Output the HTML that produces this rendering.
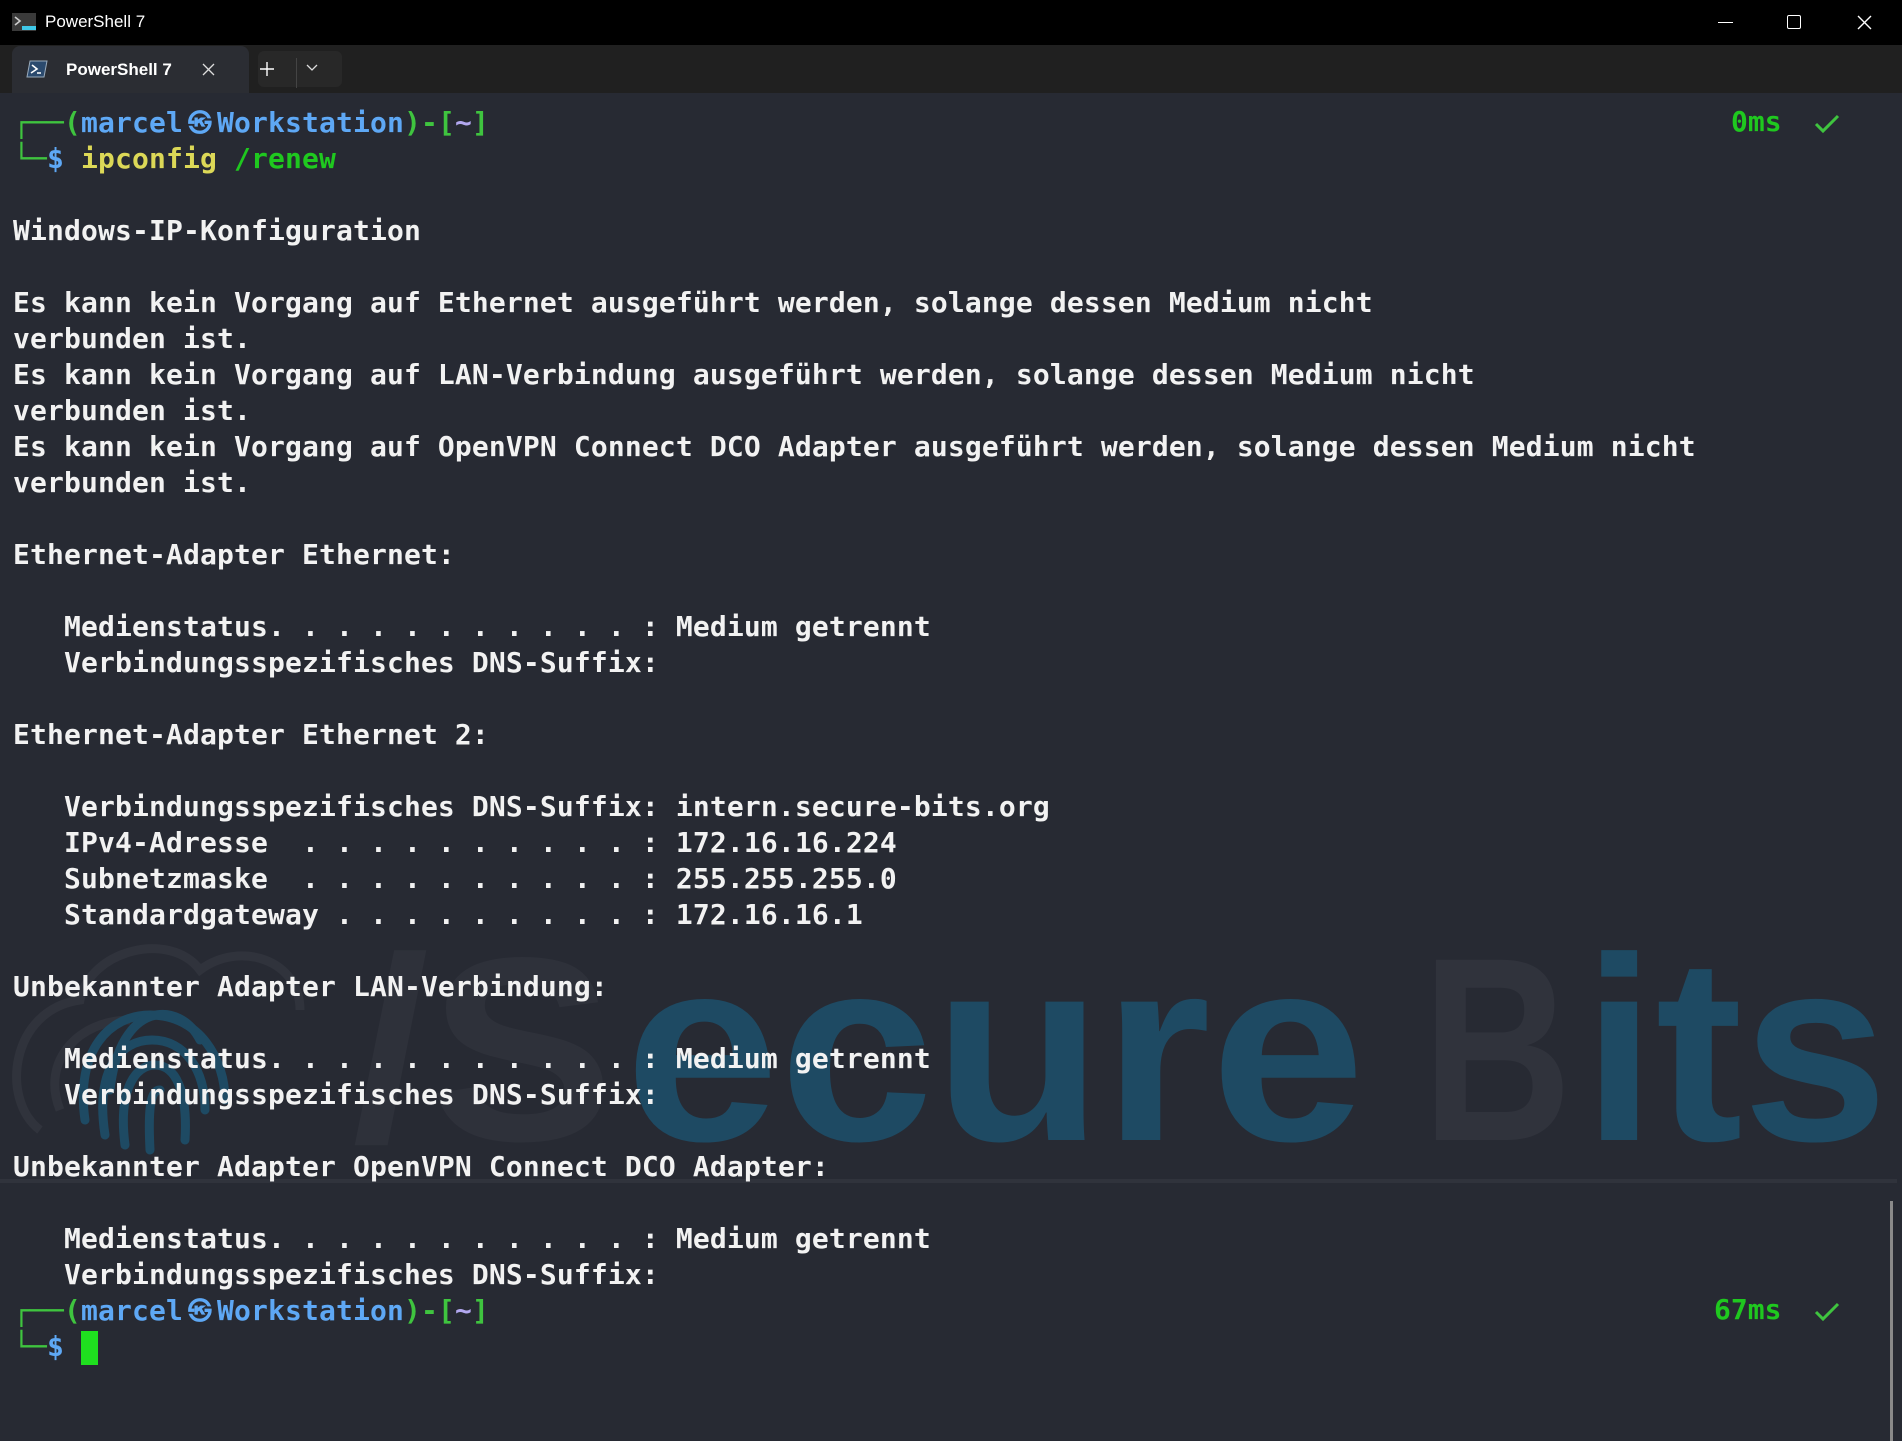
<!DOCTYPE html>
<html><head><meta charset="utf-8"><style>
*{margin:0;padding:0;box-sizing:border-box}
html,body{width:1902px;height:1441px;overflow:hidden;background:#272a33}
#title{position:absolute;left:0;top:0;width:1902px;height:45px;background:#000;color:#fff;font:17px "Liberation Sans",sans-serif}
#tabbar{position:absolute;left:0;top:45px;width:1902px;height:48px;background:#202020}
#tab{position:absolute;left:12px;top:46px;width:237px;height:47px;background:#2b2d33;border-radius:8px 8px 0 0;color:#fff;font:bold 17px "Liberation Sans",sans-serif}
#term{position:absolute;left:0;top:93px;width:1902px;height:1348px;background:#272a33;overflow:hidden}
pre{position:absolute;left:13px;top:11.5px;font-family:"DejaVu Sans Mono",monospace;font-weight:bold;font-size:28px;line-height:36px;letter-spacing:0.14px;color:#f2f2f2;white-space:pre}
.g{color:#3fc43f}.b{color:#5ea8f5}.y{color:#dcd857}.gr{color:#1fc81f}.l{color:#b3a8f0}
.k{display:inline-block;width:34px;text-align:center;font-size:24px;vertical-align:top}
.r{position:absolute;font-family:"DejaVu Sans Mono",monospace;font-weight:bold;font-size:28px;color:#1fc81f}
</style></head><body>
<div id="title">
<svg style="position:absolute;left:12px;top:13px" width="24" height="18"><rect x="0" y="0" width="24" height="18" fill="#3a3a3a"/><rect x="10" y="13" width="14" height="4" fill="#3fc8e8"/><path d="M3 4 L8 8 L3 12" stroke="#ccc" stroke-width="1.6" fill="none"/></svg>
<span style="position:absolute;left:45px;top:12px">PowerShell 7</span>
<div style="position:absolute;left:1718px;top:22px;width:15px;height:1px;background:#fff"></div>
<div style="position:absolute;left:1787px;top:15px;width:14px;height:14px;border:1.5px solid #fff;border-radius:2px"></div>
<svg style="position:absolute;left:1857px;top:15px" width="15" height="15"><path d="M1 1L14 14M14 1L1 14" stroke="#fff" stroke-width="1.4"/></svg>
</div>
<div id="tabbar"></div>
<div id="tab">
<svg style="position:absolute;left:14px;top:14px" width="22" height="18"><path d="M4 1H21L18 17H1Z" fill="#2b4a6e" stroke="#9ab" stroke-width="1"/><path d="M6 5L11 9L5 13M11 13H15" stroke="#fff" stroke-width="1.6" fill="none"/></svg>
<span style="position:absolute;left:54px;top:14px">PowerShell 7</span>
<svg style="position:absolute;left:190px;top:17px" width="13" height="13"><path d="M1 1L12 12M12 1L1 12" stroke="#ddd" stroke-width="1.3"/></svg>
</div>
<div style="position:absolute;left:258px;top:51px;width:84px;height:36px;background:#282828;border-radius:6px"></div>
<svg style="position:absolute;left:259px;top:61px" width="16" height="16"><path d="M8 1V15M1 8H15" stroke="#fff" stroke-width="1.4"/></svg>
<div style="position:absolute;left:296px;top:58px;width:1px;height:30px;background:#444"></div>
<svg style="position:absolute;left:306px;top:64px" width="12" height="8"><path d="M1 1L6 6L11 1" stroke="#ddd" stroke-width="1.3" fill="none"/></svg>
<div id="term">
<svg style="position:absolute;left:0;top:0" width="1902" height="1348">
<g transform="translate(0,-93)">
<g fill="none" stroke="#30333c" stroke-width="9">
<path d="M40 1130 C0 1100 10 1010 80 1000 C90 950 170 930 200 970 C240 940 300 960 300 1010"/>
<path d="M60 1110 C40 1060 80 1020 130 1020"/>
</g>
<g fill="none" stroke="#1e4a63" stroke-width="9" stroke-linecap="round">
<path d="M85 1120 C75 1050 110 1015 150 1015 C200 1015 225 1060 225 1100"/>
<path d="M105 1135 C95 1070 120 1040 152 1040 C185 1040 205 1070 205 1110"/>
<path d="M125 1145 C118 1090 135 1065 155 1065 C175 1065 188 1090 185 1140"/>
<path d="M150 1150 C148 1110 150 1090 160 1090"/>
<path d="M110 1090 C120 1000 180 1000 200 1040"/>
</g>
<g font-family="Liberation Sans, sans-serif" font-weight="bold" font-size="262">
<text x="352" y="1140" fill="#2e313a" textLength="262" lengthAdjust="spacingAndGlyphs">/S</text>
<text x="625" y="1140" fill="#1e4a63" textLength="740" lengthAdjust="spacingAndGlyphs">ecure</text>
<text x="1422" y="1140" fill="#30333c" textLength="150" lengthAdjust="spacingAndGlyphs">B</text>
<text x="1583" y="1140" fill="#1e4a63" textLength="305" lengthAdjust="spacingAndGlyphs">its</text>
</g>
<rect x="0" y="1179" width="1897" height="4" fill="#30333c"/>
</g>
</svg>
<pre><span class="g">┌──(</span><span class="b">marcel<span class="k">㉿</span>Workstation</span><span class="g">)-[</span><span class="l">~</span><span class="g">]</span>
<span class="g">└─</span><span class="b">$</span> <span class="y">ipconfig</span> <span class="gr">/renew</span>

Windows-IP-Konfiguration

Es kann kein Vorgang auf Ethernet ausgeführt werden, solange dessen Medium nicht
verbunden ist.
Es kann kein Vorgang auf LAN-Verbindung ausgeführt werden, solange dessen Medium nicht
verbunden ist.
Es kann kein Vorgang auf OpenVPN Connect DCO Adapter ausgeführt werden, solange dessen Medium nicht
verbunden ist.

Ethernet-Adapter Ethernet:

   Medienstatus. . . . . . . . . . . : Medium getrennt
   Verbindungsspezifisches DNS-Suffix:

Ethernet-Adapter Ethernet 2:

   Verbindungsspezifisches DNS-Suffix: intern.secure-bits.org
   IPv4-Adresse  . . . . . . . . . . : 172.16.16.224
   Subnetzmaske  . . . . . . . . . . : 255.255.255.0
   Standardgateway . . . . . . . . . : 172.16.16.1

Unbekannter Adapter LAN-Verbindung:

   Medienstatus. . . . . . . . . . . : Medium getrennt
   Verbindungsspezifisches DNS-Suffix:

Unbekannter Adapter OpenVPN Connect DCO Adapter:

   Medienstatus. . . . . . . . . . . : Medium getrennt
   Verbindungsspezifisches DNS-Suffix:
<span class="g">┌──(</span><span class="b">marcel<span class="k">㉿</span>Workstation</span><span class="g">)-[</span><span class="l">~</span><span class="g">]</span>
<span class="g">└─</span><span class="b">$</span> </pre>
<div style="position:absolute;left:81px;top:1238px;width:17px;height:34px;background:#1fe01f"></div>
<div class="r" style="left:1731px;top:12px">0ms</div>
<div class="r" style="left:1714px;top:1200px">67ms</div>
<svg style="position:absolute;left:1814px;top:21px" width="26" height="20"><path d="M2 10L9 17L24 2" stroke="#3fc43f" stroke-width="3" fill="none"/></svg>
<svg style="position:absolute;left:1814px;top:1209px" width="26" height="20"><path d="M2 10L9 17L24 2" stroke="#3fc43f" stroke-width="3" fill="none"/></svg>
<div style="position:absolute;left:1890px;top:1108px;width:3px;height:240px;background:#8a8a8a"></div>
</div>
</body></html>
